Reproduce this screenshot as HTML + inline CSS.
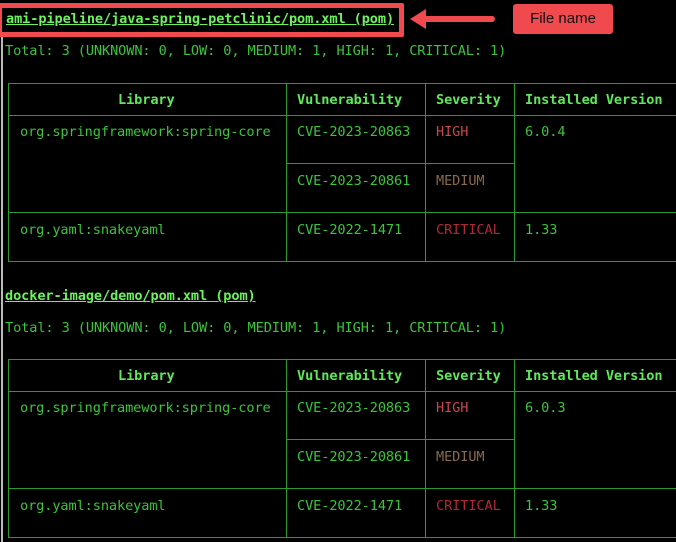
<!DOCTYPE html>
<html><head><meta charset="utf-8"><style>
*{margin:0;padding:0;box-sizing:border-box}
body{width:676px;height:542px;background:#000;position:relative;overflow:hidden;font-family:"DejaVu Sans Mono","Liberation Mono",monospace;font-size:13.6px;color:#3cc43a}
.t{position:absolute;white-space:pre;line-height:16px;letter-spacing:-0.1px}
.h{color:#5fe85a;font-weight:bold}
.u{text-decoration:underline;color:#6bf25d;font-weight:bold}
.l{position:absolute;background:#2a9a2a}
.hi{color:#c8474c}.me{color:#8a6a4a}.cr{color:#b02a35}
</style></head><body>
<div style="position:absolute;left:1px;top:36px;width:2px;height:506px;background:#bbb"></div>
<div style="position:absolute;left:-3px;top:3px;width:407px;height:34px;border:5px solid #f04a4f;border-radius:2px"></div>
<div class="t u" style="left:6px;top:11px">ami-pipeline/java-spring-petclinic/pom.xml (pom)</div>
<svg style="position:absolute;left:405px;top:6px" width="96" height="26"><path d="M5 13 L21 3 L21 10 L88 10 Q92 13 88 16 L21 16 L21 23 Z" fill="#f04a4f"/></svg>
<div style="position:absolute;left:513px;top:4px;width:100px;height:30px;background:#f04a4f;border-radius:3px;color:#111;font-family:'Liberation Sans',sans-serif;font-size:15px;text-align:center;line-height:30px">File name</div>
<div class="t" style="left:5px;top:43px">Total: 3 (UNKNOWN: 0, LOW: 0, MEDIUM: 1, HIGH: 1, CRITICAL: 1)</div>

<div class="t u" style="left:5px;top:288px">docker-image/demo/pom.xml (pom)</div>
<div class="t" style="left:5px;top:320px">Total: 3 (UNKNOWN: 0, LOW: 0, MEDIUM: 1, HIGH: 1, CRITICAL: 1)</div>

<script>
function tbl(o,v){
 var b=document.body,s='';
 function L(x,y,w,h){s+='<div class="l" style="left:'+x+'px;top:'+(y+o)+'px;width:'+w+'px;height:'+h+'px"></div>';}
 L(8,83,668,1);L(8,115,668,1);L(286,163,229,1);L(8,212,668,1);L(8,261,668,1);
 L(8,83,1,179);L(286,83,1,179);L(425,83,1,179);L(514,83,1,179);
 function T(x,y,t,c){s+='<div class="t '+(c||'')+'" style="left:'+x+'px;top:'+(y+o)+'px">'+t+'</div>';}
 T(118,92,'Library','h');T(297,92,'Vulnerability','h');T(436,92,'Severity','h');T(525,92,'Installed Version','h');
 T(20,124,'org.springframework:spring-core');T(297,124,'CVE-2023-20863');T(436,124,'HIGH','hi');T(525,124,v);
 T(297,173,'CVE-2023-20861');T(436,173,'MEDIUM','me');
 T(20,222,'org.yaml:snakeyaml');T(297,222,'CVE-2022-1471');T(436,222,'CRITICAL','cr');T(525,222,'1.33');
 b.insertAdjacentHTML('beforeend',s);
}
tbl(0,'6.0.4');tbl(276,'6.0.3');
</script>
</body></html>
